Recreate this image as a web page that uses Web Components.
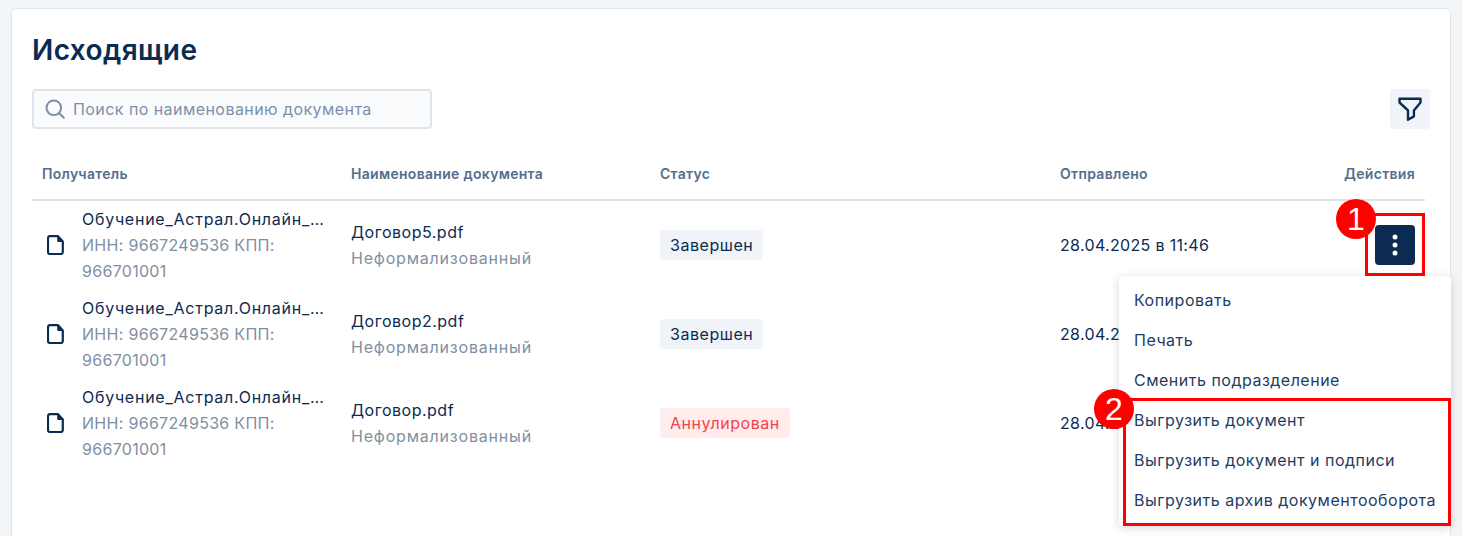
<!doctype html>
<html lang="ru">
<head>
<meta charset="utf-8">
<title>Исходящие</title>
<style>
  html, body { margin: 0; height: 100%; overflow: hidden; }
  body { background: #f2f5f8; font-family: Inter, "Noto Sans", sans-serif; }
</style>
</head>
<body>
<outgoing-page>
  <doc-row name="Обучение_Астрал.Онлайн_…" inn="ИНН: 9667249536 КПП: 966701001" file="Договор5.pdf" status="Завершен" sent="28.04.2025 в 11:46" active></doc-row>
  <doc-row name="Обучение_Астрал.Онлайн_…" inn="ИНН: 9667249536 КПП: 966701001" file="Договор2.pdf" status="Завершен" sent="28.04.2025 в 11:46"></doc-row>
  <doc-row name="Обучение_Астрал.Онлайн_…" inn="ИНН: 9667249536 КПП: 966701001" file="Договор.pdf" status="Аннулирован" sent="28.04.2025 в 11:46" danger></doc-row>
</outgoing-page>

<script>
// Outgoing documents page

const pageTemplate = document.createElement("template");
pageTemplate.innerHTML = /* html */ `
  <style>
  :host {
    display: block;
    position: relative;
    height: 536px;
    padding: 8px 11px 0;
    box-sizing: border-box;
    overflow: hidden;
    color: #0c2b52;
  }
  #card {
    background: #fff;
    border: 1px solid #e1e6ed;
    border-radius: 5px;
    height: 600px;
    padding: 21px 20px 0;
    box-sizing: border-box;
  }
  h1 {
    margin: 0 0 18px;
    font-size: 28px;
    line-height: 41px;
    font-weight: 600;
    letter-spacing: .4px;
    color: #0c2b52;
  }
  #toolbar {
    display: flex;
    justify-content: space-between;
    margin-bottom: 18px;
  }
  #filter {
    width: 40px;
    height: 40px;
    border-radius: 4px;
    background: #f0f3f7;
    display: flex;
    align-items: center;
    justify-content: center;
  }
  #table { width: 1393px; }
  </style>
  <div id="card">
    <h1>Исходящие</h1>
    <div id="toolbar">
      <search-box placeholder="Поиск по наименованию документа"></search-box>
      <div id="filter">
        <svg width="26" height="26" viewBox="0 0 26 26" fill="none" stroke="#0c2b52" stroke-width="2.4" stroke-linejoin="round">
          <path d="M2.5 2.8h21v3.7l-6.6 7.9v6l-5.9 3.4v-9.4L2.5 6.5z"/>
        </svg>
      </div>
    </div>
    <div id="table">
      <doc-head></doc-head>
      <slot></slot>
    </div>
  </div>
  <action-menu></action-menu>
  <red-callout num="1" style="left:1365px;top:213px;width:60px;height:63px" badge-left="-32px" badge-top="-17px"></red-callout>
  <red-callout num="2" style="left:1123px;top:398px;width:328px;height:128px" badge-left="-32px" badge-top="-12px"></red-callout>
`;

class OutgoingPage extends HTMLElement {
  constructor() {
    super();
    this.attachShadow({ mode: "open" }).appendChild(pageTemplate.content.cloneNode(true));
  }
}

const searchTemplate = document.createElement("template");
searchTemplate.innerHTML = /* html */ `
  <style>
  :host {
    display: flex;
    align-items: center;
    gap: 8px;
    width: 400px;
    height: 40px;
    box-sizing: border-box;
    padding: 0 11px;
    background: #f9fbfc;
    border: 2px solid #dfe5ec;
    border-radius: 4px;
    font-size: 16px;
    letter-spacing: .44px;
    color: #7c90aa;
  }
  svg { flex: none; }
  </style>
  <svg width="20" height="20" viewBox="0 0 20 20" fill="none" stroke="#7c90aa" stroke-width="2" stroke-linecap="round">
    <circle cx="8.8" cy="8.8" r="7.3"/>
    <path d="M14.2 14.2l4.6 4.6"/>
  </svg>
  <span id="text"></span>
`;

class SearchBox extends HTMLElement {
  constructor() {
    super();
    this.attachShadow({ mode: "open" }).appendChild(searchTemplate.content.cloneNode(true));
  }
  connectedCallback() {
    this.shadowRoot.querySelector("#text").textContent = this.getAttribute("placeholder");
  }
}

// column widths are shared by the head and the rows
const columns = "grid-template-columns: 309px 309px 400px 1fr 96px;";

const headTemplate = document.createElement("template");
headTemplate.innerHTML = /* html */ `
  <style>
  :host {
    display: grid;
    ${columns}
    height: 54px;
    box-sizing: border-box;
    align-items: center;
    border-bottom: 2px solid #e0e0e0;
    font-size: 14px;
    font-weight: 600;
    letter-spacing: .3px;
    color: #546e8c;
  }
  div { padding-left: 10px; }
  div:last-child { padding: 0 10px 0 0; text-align: right; }
  </style>
  <div>Получатель</div>
  <div>Наименование документа</div>
  <div>Статус</div>
  <div>Отправлено</div>
  <div>Действия</div>
`;

class DocHead extends HTMLElement {
  constructor() {
    super();
    this.attachShadow({ mode: "open" }).appendChild(headTemplate.content.cloneNode(true));
  }
}

const rowTemplate = document.createElement("template");
rowTemplate.innerHTML = /* html */ `
  <style>
  :host {
    display: grid;
    ${columns}
    height: 89px;
    padding-bottom: 1px;
    box-sizing: border-box;
    align-items: center;
    font-size: 16px;
    line-height: 26px;
    color: #0c2b52;
  }
  #who {
    display: flex;
    align-items: center;
    gap: 18px;
    padding-left: 15px;
  }
  #who svg { flex: none; }
  #who-text { width: 245px; min-width: 0; }
  #name { white-space: nowrap; letter-spacing: .75px; }
  .sub { color: #7f8fa3; letter-spacing: .8px; }
  #inn { letter-spacing: .3px; }
  #file { letter-spacing: .5px; }
  #doc { padding-left: 10px; }
  #status { padding-left: 10px; }
  #sent { padding-left: 10px; white-space: nowrap; letter-spacing: .33px; }
  #actions { display: flex; justify-content: flex-end; padding-right: 10px; }
  #more {
    width: 40px;
    height: 40px;
    border-radius: 4px;
    display: none;
    align-items: center;
    justify-content: center;
    background: #0c2b52;
  }
  :host([active]) #more { display: flex; }
  </style>
  <div id="who">
    <svg width="17" height="20" viewBox="0 0 17 20" fill="none" stroke="#0c2b52" stroke-width="2.2" stroke-linejoin="round">
      <path d="M3 1.1h7.8l5 5.4V17a2 2 0 0 1-2 2H3a2 2 0 0 1-2-2V3a2 2 0 0 1 2-1.9z"/>
      <path d="M10.8 1.1v5.4h5z" fill="#0c2b52" stroke-width="1"/>
    </svg>
    <div id="who-text">
      <div id="name"></div>
      <div id="inn" class="sub"></div>
    </div>
  </div>
  <div id="doc">
    <div id="file"></div>
    <div class="sub">Неформализованный</div>
  </div>
  <div id="status"><status-tag></status-tag></div>
  <div id="sent"></div>
  <div id="actions">
    <div id="more">
      <svg width="6" height="24" viewBox="0 0 6 24" fill="#fff">
        <circle cx="3" cy="4" r="2.5"/><circle cx="3" cy="12" r="2.5"/><circle cx="3" cy="20" r="2.5"/>
      </svg>
    </div>
  </div>
`;

class DocRow extends HTMLElement {
  constructor() {
    super();
    this.attachShadow({ mode: "open" }).appendChild(rowTemplate.content.cloneNode(true));
  }
  connectedCallback() {
    const root = this.shadowRoot;
    root.querySelector("#name").textContent = this.getAttribute("name");
    root.querySelector("#inn").textContent = this.getAttribute("inn");
    root.querySelector("#file").textContent = this.getAttribute("file");
    root.querySelector("#sent").textContent = this.getAttribute("sent");
    const tag = root.querySelector("status-tag");
    tag.textContent = this.getAttribute("status");
    if (this.hasAttribute("danger")) tag.setAttribute("danger", "");
  }
}

const tagTemplate = document.createElement("template");
tagTemplate.innerHTML = /* html */ `
  <style>
  :host {
    display: inline-block;
    padding: 0 10px;
    height: 30px;
    line-height: 30px;
    border-radius: 4px;
    background: #f0f3f7;
    color: #0c2b52;
    font-size: 16px;
    letter-spacing: .55px;
  }
  :host([danger]) {
    background: #ffeded;
    color: #f4414b;
  }
  </style>
  <slot></slot>
`;

class StatusTag extends HTMLElement {
  constructor() {
    super();
    this.attachShadow({ mode: "open" }).appendChild(tagTemplate.content.cloneNode(true));
  }
}

const menuTemplate = document.createElement("template");
menuTemplate.innerHTML = /* html */ `
  <style>
  :host {
    position: absolute;
    left: 1119px;
    top: 276px;
    width: 332px;
    padding: 4px 0 6px;
    background: #fff;
    border-radius: 4px;
    box-shadow: 0 2px 10px rgba(12, 43, 82, .18);
    font-size: 16px;
    letter-spacing: .5px;
    color: #1f3c63;
  }
  div {
    height: 40px;
    line-height: 40px;
    padding-left: 15px;
    white-space: nowrap;
  }
  </style>
  <div>Копировать</div>
  <div>Печать</div>
  <div>Сменить подразделение</div>
  <div>Выгрузить документ</div>
  <div>Выгрузить документ и подписи</div>
  <div>Выгрузить архив документооборота</div>
`;

class ActionMenu extends HTMLElement {
  constructor() {
    super();
    this.attachShadow({ mode: "open" }).appendChild(menuTemplate.content.cloneNode(true));
  }
}

const calloutTemplate = document.createElement("template");
calloutTemplate.innerHTML = /* html */ `
  <style>
  :host {
    position: absolute;
    box-sizing: border-box;
    border: 3px solid #f00;
  }
  #badge {
    position: absolute;
    width: 40px;
    height: 40px;
    border-radius: 50%;
    background: #f00;
    color: #fff;
    font-family: "Liberation Sans", sans-serif;
    font-size: 32px;
    line-height: 40px;
    text-align: center;
  }
  </style>
  <div id="badge"></div>
`;

class RedCallout extends HTMLElement {
  constructor() {
    super();
    this.attachShadow({ mode: "open" }).appendChild(calloutTemplate.content.cloneNode(true));
  }
  connectedCallback() {
    const badge = this.shadowRoot.querySelector("#badge");
    badge.textContent = this.getAttribute("num");
    badge.style.left = this.getAttribute("badge-left");
    badge.style.top = this.getAttribute("badge-top");
  }
}

customElements.define("status-tag", StatusTag);
customElements.define("search-box", SearchBox);
customElements.define("doc-head", DocHead);
customElements.define("doc-row", DocRow);
customElements.define("action-menu", ActionMenu);
customElements.define("red-callout", RedCallout);
customElements.define("outgoing-page", OutgoingPage);
</script>
</body>
</html>
